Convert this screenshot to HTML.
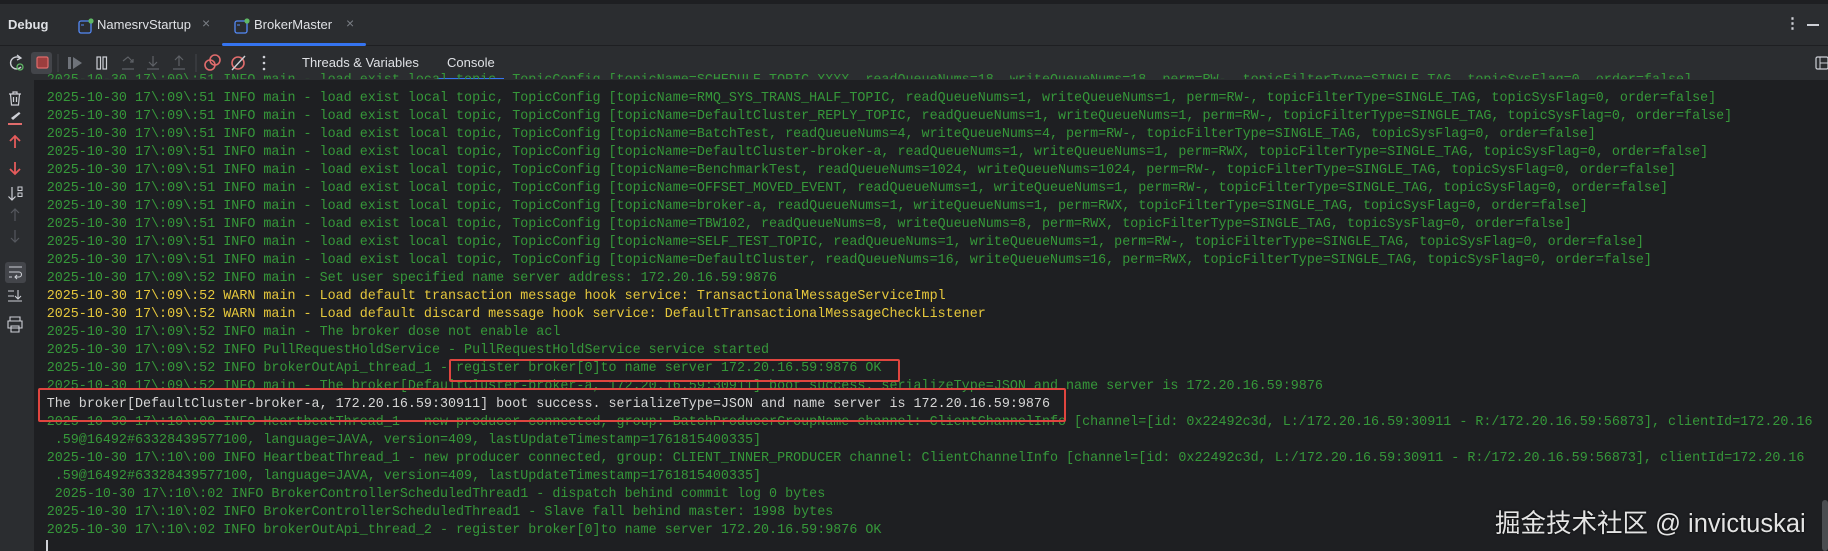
<!DOCTYPE html>
<html><head><meta charset="utf-8"><style>
*{margin:0;padding:0;box-sizing:border-box}
body{width:1828px;height:551px;background:#1e1f22;position:relative;overflow:hidden;font-family:"Liberation Sans","Noto Sans CJK SC",sans-serif;color:#dfe1e5}
.abs{position:absolute}
#hdr{left:0;top:4px;width:1828px;height:42px;background:#2b2d30;border-bottom:1px solid #1e1f22}
#tb{left:0;top:46px;width:1828px;height:34px;background:#2b2d30}
#gut{left:0;top:80px;width:34px;height:471px;background:#2b2d30}
.ln{position:absolute;left:46.7px;font-family:"Liberation Mono",monospace;font-size:13.38px;line-height:18px;white-space:pre;color:#36983a}
.y{color:#e6c83c}
.w{color:#d6d6d6}
.t{font-size:13px;color:#dfe1e5}
.box{position:absolute;border:2px solid #e0453f;border-radius:2px}
</style></head><body>
<div class="abs" id="hdr"></div>
<div class="abs" id="tb"></div>
<div class="abs" id="gut"></div>

<div class="abs" style="left:8px;top:17px;font-size:13px;font-weight:bold">Debug</div>
<svg class="abs" style="left:78px;top:18px" width="16" height="16"><rect x="1" y="3" width="12" height="12" rx="2" fill="none" stroke="#548af7" stroke-width="1.3"/><line x1="3" y1="7" x2="6" y2="7" stroke="#548af7"/><circle cx="13" cy="3" r="2.6" fill="#5fb865"/></svg>
<div class="abs t" style="left:97px;top:17px">NamesrvStartup</div>
<div class="abs" style="left:202px;top:15px;font-size:14px;color:#7a7e85">×</div>
<svg class="abs" style="left:234px;top:18px" width="16" height="16"><rect x="1" y="3" width="12" height="12" rx="2" fill="none" stroke="#548af7" stroke-width="1.3"/><line x1="3" y1="7" x2="6" y2="7" stroke="#548af7"/><circle cx="13" cy="3" r="2.6" fill="#5fb865"/></svg>
<div class="abs t" style="left:254px;top:17px">BrokerMaster</div>
<div class="abs" style="left:346px;top:15px;font-size:14px;color:#7a7e85">×</div>
<div class="abs" style="left:222px;top:43px;width:144px;height:3px;background:#3574f0;border-radius:2px"></div>
<div class="abs" style="left:1785px;top:14px;font-size:15px;color:#ced0d6;font-weight:bold">⋮</div>
<div class="abs" style="left:1807px;top:24px;width:12px;height:1.5px;background:#ced0d6"></div>

<svg class="abs" style="left:0;top:46px" width="300" height="34">
<path d="M20 12 A6 6 0 1 0 21 21" fill="none" stroke="#ced0d6" stroke-width="1.4"/><path d="M17 9 L21 12 L17 14" fill="none" stroke="#ced0d6" stroke-width="1.3"/><circle cx="20" cy="21" r="3" fill="none" stroke="#5fb865" stroke-width="1.3"/>
<rect x="31" y="6" width="21" height="22" rx="3" fill="#43454a"/><rect x="37" y="11" width="11" height="11" rx="1.5" fill="#9c3e3e" stroke="#e06c6c" stroke-width="1.2"/>
<line x1="58" y1="8" x2="58" y2="26" stroke="#43454a"/>
<rect x="68" y="11" width="3" height="12" fill="#6f737a"/><path d="M73 11 L82 17 L73 23Z" fill="#6f737a"/>
<rect x="97" y="11" width="3.5" height="12" fill="none" stroke="#ced0d6" stroke-width="1.2"/><rect x="103" y="11" width="3.5" height="12" fill="none" stroke="#ced0d6" stroke-width="1.2"/>
<path d="M122 23 H134 M123 15 L128 11 L133 16 M130 16 h3 v-3" fill="none" stroke="#5e6166" stroke-width="1.2"/>
<path d="M147 23 H159 M153 10 V20 M149 16 L153 20 L157 16" fill="none" stroke="#5e6166" stroke-width="1.2"/>
<path d="M173 23 H185 M179 20 V10 M175 14 L179 10 L183 14" fill="none" stroke="#5e6166" stroke-width="1.2"/>
<line x1="196" y1="8" x2="196" y2="26" stroke="#43454a"/>
<circle cx="210" cy="19" r="5" fill="none" stroke="#e06c6c" stroke-width="1.6"/><circle cx="215" cy="14" r="5" fill="none" stroke="#e06c6c" stroke-width="1.6"/>
<circle cx="238" cy="17" r="6" fill="none" stroke="#e06c6c" stroke-width="1.6"/><line x1="232" y1="24" x2="245" y2="10" stroke="#ced0d6" stroke-width="1.4"/>
<circle cx="264" cy="11" r="1.3" fill="#ced0d6"/><circle cx="264" cy="17" r="1.3" fill="#ced0d6"/><circle cx="264" cy="23" r="1.3" fill="#ced0d6"/>
</svg>
<div class="abs t" style="left:302px;top:55px">Threads &amp; Variables</div>
<div class="abs t" style="left:447px;top:55px">Console</div>
<div class="abs" style="left:437px;top:78px;width:67px;height:2px;background:#3574f0"></div>
<svg class="abs" style="left:1815px;top:56px" width="13" height="14"><rect x="1" y="1" width="12" height="12" rx="1.5" fill="none" stroke="#ced0d6" stroke-width="1.2"/><line x1="5" y1="1" x2="5" y2="13" stroke="#ced0d6"/><line x1="5" y1="7" x2="13" y2="7" stroke="#ced0d6"/></svg>

<svg class="abs" style="left:0;top:80px" width="34" height="260">
<g fill="none" stroke="#ced0d6" stroke-width="1.2">
<path d="M9 14 H21 M13 14 V12 H17 V14 M10.5 14 L11.5 25 H18.5 L19.5 14 M13.5 17 V22 M16.5 17 V22"/>
</g>
<path d="M11 38 L19 32 L20.5 33.5 L13 40Z" fill="#ced0d6"/><rect x="8" y="43" width="14" height="2" fill="#e06c6c"/>
<path d="M15 68 V56 M10 61 L15 56 L20 61" fill="none" stroke="#e55b5b" stroke-width="1.8"/>
<path d="M15 82 V94 M10 89 L15 94 L20 89" fill="none" stroke="#e55b5b" stroke-width="1.8"/>
<path d="M12 107 V120 M8.5 116.5 L12 120 L15.5 116.5" fill="none" stroke="#ced0d6" stroke-width="1.2"/><rect x="18" y="107" width="4" height="3.5" fill="none" stroke="#ced0d6"/><rect x="18" y="113" width="4" height="3.5" fill="none" stroke="#ced0d6"/>
<path d="M15 141 V129 M11 133 L15 129 L19 133" fill="none" stroke="#55585e" stroke-width="1.2"/>
<path d="M15 150 V162 M11 158 L15 162 L19 158" fill="none" stroke="#55585e" stroke-width="1.2"/>
<rect x="5" y="182" width="21" height="21" rx="3" fill="#43454a"/>
<path d="M9 187 H22 M9 192 H19 A2.5 2.5 0 0 1 19 197 H15 M17 195 L15 197 L17 199 M9 197 H12" fill="none" stroke="#ced0d6" stroke-width="1.1"/>
<path d="M8 211 H14 M8 216 H14 M8 221 H22 M18 210 V219 M15 216 L18 219 L21 216" fill="none" stroke="#ced0d6" stroke-width="1.1"/>
<path d="M10 241 V237 H20 V241 M8 241 H22 V248 H8Z M11 246 H19 V252 H11Z" fill="none" stroke="#ced0d6" stroke-width="1.1"/>
</svg>

<div class="ln" style="top:72px">2025-10-30 17\:09\:51 INFO main - load exist local topic, TopicConfig [topicName=SCHEDULE_TOPIC_XXXX, readQueueNums=18, writeQueueNums=18, perm=RW-, topicFilterType=SINGLE_TAG, topicSysFlag=0, order=false]</div>
<div class="abs" style="left:34px;top:80px;width:1794px;height:6px;background:#1e1f22"></div>
<div class="abs" style="left:0;top:79px;width:1828px;height:1px;background:#2b2d30"></div>
<div class="ln" style="top:90px">2025-10-30 17\:09\:51 INFO main - load exist local topic, TopicConfig [topicName=RMQ_SYS_TRANS_HALF_TOPIC, readQueueNums=1, writeQueueNums=1, perm=RW-, topicFilterType=SINGLE_TAG, topicSysFlag=0, order=false]</div>
<div class="ln" style="top:108px">2025-10-30 17\:09\:51 INFO main - load exist local topic, TopicConfig [topicName=DefaultCluster_REPLY_TOPIC, readQueueNums=1, writeQueueNums=1, perm=RW-, topicFilterType=SINGLE_TAG, topicSysFlag=0, order=false]</div>
<div class="ln" style="top:126px">2025-10-30 17\:09\:51 INFO main - load exist local topic, TopicConfig [topicName=BatchTest, readQueueNums=4, writeQueueNums=4, perm=RW-, topicFilterType=SINGLE_TAG, topicSysFlag=0, order=false]</div>
<div class="ln" style="top:144px">2025-10-30 17\:09\:51 INFO main - load exist local topic, TopicConfig [topicName=DefaultCluster-broker-a, readQueueNums=1, writeQueueNums=1, perm=RWX, topicFilterType=SINGLE_TAG, topicSysFlag=0, order=false]</div>
<div class="ln" style="top:162px">2025-10-30 17\:09\:51 INFO main - load exist local topic, TopicConfig [topicName=BenchmarkTest, readQueueNums=1024, writeQueueNums=1024, perm=RW-, topicFilterType=SINGLE_TAG, topicSysFlag=0, order=false]</div>
<div class="ln" style="top:180px">2025-10-30 17\:09\:51 INFO main - load exist local topic, TopicConfig [topicName=OFFSET_MOVED_EVENT, readQueueNums=1, writeQueueNums=1, perm=RW-, topicFilterType=SINGLE_TAG, topicSysFlag=0, order=false]</div>
<div class="ln" style="top:198px">2025-10-30 17\:09\:51 INFO main - load exist local topic, TopicConfig [topicName=broker-a, readQueueNums=1, writeQueueNums=1, perm=RWX, topicFilterType=SINGLE_TAG, topicSysFlag=0, order=false]</div>
<div class="ln" style="top:216px">2025-10-30 17\:09\:51 INFO main - load exist local topic, TopicConfig [topicName=TBW102, readQueueNums=8, writeQueueNums=8, perm=RWX, topicFilterType=SINGLE_TAG, topicSysFlag=0, order=false]</div>
<div class="ln" style="top:234px">2025-10-30 17\:09\:51 INFO main - load exist local topic, TopicConfig [topicName=SELF_TEST_TOPIC, readQueueNums=1, writeQueueNums=1, perm=RW-, topicFilterType=SINGLE_TAG, topicSysFlag=0, order=false]</div>
<div class="ln" style="top:252px">2025-10-30 17\:09\:51 INFO main - load exist local topic, TopicConfig [topicName=DefaultCluster, readQueueNums=16, writeQueueNums=16, perm=RWX, topicFilterType=SINGLE_TAG, topicSysFlag=0, order=false]</div>
<div class="ln" style="top:270px">2025-10-30 17\:09\:52 INFO main - Set user specified name server address: 172.20.16.59:9876</div>
<div class="ln y" style="top:288px">2025-10-30 17\:09\:52 WARN main - Load default transaction message hook service: TransactionalMessageServiceImpl</div>
<div class="ln y" style="top:306px">2025-10-30 17\:09\:52 WARN main - Load default discard message hook service: DefaultTransactionalMessageCheckListener</div>
<div class="ln" style="top:324px">2025-10-30 17\:09\:52 INFO main - The broker dose not enable acl</div>
<div class="ln" style="top:342px">2025-10-30 17\:09\:52 INFO PullRequestHoldService - PullRequestHoldService service started</div>
<div class="ln" style="top:360px">2025-10-30 17\:09\:52 INFO brokerOutApi_thread_1 - register broker[0]to name server 172.20.16.59:9876 OK</div>
<div class="ln" style="top:378px">2025-10-30 17\:09\:52 INFO main - The broker[DefaultCluster-broker-a, 172.20.16.59:30911] boot success. serializeType=JSON and name server is 172.20.16.59:9876</div>
<div class="ln w" style="top:396px;left:46.7px">The broker[DefaultCluster-broker-a, 172.20.16.59:30911] boot success. serializeType=JSON and name server is 172.20.16.59:9876</div>
<div class="ln" style="top:414px">2025-10-30 17\:10\:00 INFO HeartbeatThread_1 - new producer connected, group: BatchProducerGroupName channel: ClientChannelInfo [channel=[id: 0x22492c3d, L:/172.20.16.59:30911 - R:/172.20.16.59:56873], clientId=172.20.16</div>
<div class="ln" style="top:432px"> .59@16492#63328439577100, language=JAVA, version=409, lastUpdateTimestamp=1761815400335]</div>
<div class="ln" style="top:450px">2025-10-30 17\:10\:00 INFO HeartbeatThread_1 - new producer connected, group: CLIENT_INNER_PRODUCER channel: ClientChannelInfo [channel=[id: 0x22492c3d, L:/172.20.16.59:30911 - R:/172.20.16.59:56873], clientId=172.20.16</div>
<div class="ln" style="top:468px"> .59@16492#63328439577100, language=JAVA, version=409, lastUpdateTimestamp=1761815400335]</div>
<div class="ln" style="top:486px"> 2025-10-30 17\:10\:02 INFO BrokerControllerScheduledThread1 - dispatch behind commit log 0 bytes</div>
<div class="ln" style="top:504px">2025-10-30 17\:10\:02 INFO BrokerControllerScheduledThread1 - Slave fall behind master: 1998 bytes</div>
<div class="ln" style="top:522px">2025-10-30 17\:10\:02 INFO brokerOutApi_thread_2 - register broker[0]to name server 172.20.16.59:9876 OK</div>
<div class="abs" style="left:46px;top:540px;width:2px;height:11px;background:#ced0d6"></div>

<div class="box" style="left:449px;top:359px;width:451px;height:23px"></div>
<div class="box" style="left:38px;top:388px;width:1028px;height:34px"></div>

<div class="abs" style="left:1822px;top:500px;width:6px;height:51px;background:#4a4c50;border-radius:3px"></div>
<div class="abs" style="left:1495px;top:503px;font-size:25.5px;color:#e4e4e4;text-shadow:0 0 2px #000;white-space:nowrap">掘金技术社区 @ invictuskai</div>
</body></html>
